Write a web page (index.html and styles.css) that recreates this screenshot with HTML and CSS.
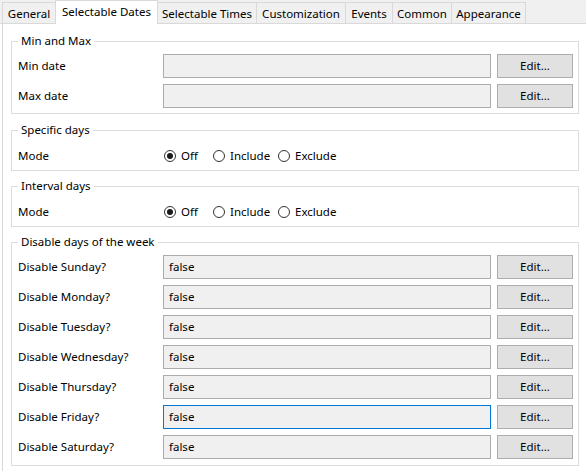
FILE: index.html
```html
<!DOCTYPE html>
<html lang="en">
<head>
<meta charset="utf-8">
<title>Selectable Dates</title>
<link rel="stylesheet" href="styles.css">
</head>
<body>
<div class="tabs">
  <div class="tab tab-general">General</div>
  <div class="tab tab-dates active">Selectable Dates</div>
  <div class="tab tab-times">Selectable Times</div>
  <div class="tab tab-custom">Customization</div>
  <div class="tab tab-events">Events</div>
  <div class="tab tab-common">Common</div>
  <div class="tab tab-appearance">Appearance</div>
</div>
<div class="panel">
  <div class="group group-minmax">
    <div class="group-title">Min and Max</div>
    <div class="rows">
      <div class="row"><span class="label">Min date</span><div class="field"></div><button class="btn">Edit...</button></div>
      <div class="row"><span class="label">Max date</span><div class="field"></div><button class="btn">Edit...</button></div>
    </div>
  </div>

  <div class="group group-specific">
    <div class="group-title">Specific days</div>
    <div class="radio-row">
      <span class="label">Mode</span>
      <div class="radios">
        <label class="radio radio-off"><span class="circle checked"></span>Off</label>
        <label class="radio radio-include"><span class="circle"></span>Include</label>
        <label class="radio"><span class="circle"></span>Exclude</label>
      </div>
    </div>
  </div>

  <div class="group group-interval">
    <div class="group-title">Interval days</div>
    <div class="radio-row">
      <span class="label">Mode</span>
      <div class="radios">
        <label class="radio radio-off"><span class="circle checked"></span>Off</label>
        <label class="radio radio-include"><span class="circle"></span>Include</label>
        <label class="radio"><span class="circle"></span>Exclude</label>
      </div>
    </div>
  </div>

  <div class="group group-week">
    <div class="group-title">Disable days of the week</div>
    <div class="rows">
      <div class="row"><span class="label">Disable Sunday?</span><div class="field">false</div><button class="btn">Edit...</button></div>
      <div class="row"><span class="label">Disable Monday?</span><div class="field">false</div><button class="btn">Edit...</button></div>
      <div class="row"><span class="label">Disable Tuesday?</span><div class="field">false</div><button class="btn">Edit...</button></div>
      <div class="row"><span class="label">Disable Wednesday?</span><div class="field">false</div><button class="btn">Edit...</button></div>
      <div class="row"><span class="label">Disable Thursday?</span><div class="field">false</div><button class="btn">Edit...</button></div>
      <div class="row"><span class="label">Disable Friday?</span><div class="field focused">false</div><button class="btn">Edit...</button></div>
      <div class="row"><span class="label">Disable Saturday?</span><div class="field">false</div><button class="btn">Edit...</button></div>
    </div>
  </div>
</div>
</body>
</html>
```

FILE: styles.css
```css
html, body {
  margin: 0;
  padding: 0;
  overflow: hidden;
  background: #ffffff;
}

body {
  font-family: "Noto Sans", "Open Sans", sans-serif;
  font-size: 11.5px;
  line-height: 16px;
  color: #000000;
}

/* ---------- tabs ---------- */
.tabs {
  display: flex;
  align-items: flex-end;
  height: 23px;
  padding-left: 3px;
  background: #f0f0f0;
  border-bottom: 1px solid #d9d9d9;
}

.tab {
  box-sizing: border-box;
  height: 21px;
  margin-left: -1px;
  padding-top: 3px;
  border: 1px solid #d9d9d9;
  border-bottom: none;
  background: #f0f0f0;
  text-align: center;
  white-space: nowrap;
}

.tab.active {
  position: relative;
  z-index: 1;
  height: 24px;
  margin-bottom: -1px;
  background: #ffffff;
}

.tab-general { width: 54px; }
.tab-dates { width: 103px; }
.tab-times { width: 100px; }
.tab-custom { width: 90px; }
.tab-events { width: 48px; }
.tab-common { width: 60px; }
.tab-appearance { width: 75px; }

/* ---------- panel ---------- */
.panel {
  margin-left: 2px;
  border-left: 1px solid #d9d9d9;
  height: 447px;
  padding: 17px 0 0 8px;
  box-sizing: border-box;
  width: 600px;
}

.group {
  box-sizing: border-box;
  width: 568px;
  border: 1px solid #dcdcdc;
  padding: 0 5px 6px 6px;
}

.group-title {
  width: fit-content;
  margin-top: -9px;
  padding: 0 3px;
  background: #ffffff;
  line-height: 16px;
}

.group-minmax { padding-bottom: 5px; }
.group-specific { margin-top: 16px; }
.group-interval { margin-top: 15px; }
.group-week { margin-top: 15px; }

.rows {
  margin-top: 5px;
  display: flex;
  flex-direction: column;
  gap: 6px;
}

.row {
  display: grid;
  grid-template-columns: 139px 328px 76px;
  column-gap: 6px;
  align-items: center;
  height: 24px;
}

.label {
  white-space: nowrap;
}

.field {
  box-sizing: border-box;
  height: 24px;
  border: 1px solid #acacac;
  background: #f0f0f0;
  padding: 3px 0 0 5px;
  line-height: 16px;
}

.field.focused {
  border-color: #0078d7;
}

.btn {
  box-sizing: border-box;
  height: 24px;
  margin: 0;
  border: 1px solid #adadad;
  background: #e1e1e1;
  font-family: inherit;
  font-size: 11.5px;
  line-height: 16px;
  color: #000000;
  padding: 0;
}

/* ---------- radio rows ---------- */
.radio-row {
  margin-top: 9px;
  height: 17px;
  display: grid;
  grid-template-columns: 145px auto;
  align-items: center;
}

.radios {
  display: flex;
  align-items: center;
  padding-left: 1px;
}

.radio {
  display: flex;
  align-items: center;
  gap: 5px;
  white-space: nowrap;
}

.radio-off { width: 49px; }
.radio-include { width: 65px; }

.circle {
  box-sizing: border-box;
  width: 12px;
  height: 12px;
  border: 1px solid #333333;
  border-radius: 50%;
  background: #ffffff;
  display: flex;
  align-items: center;
  justify-content: center;
}

.circle.checked::after {
  content: "";
  width: 6px;
  height: 6px;
  border-radius: 50%;
  background: #1a1a1a;
}
```
